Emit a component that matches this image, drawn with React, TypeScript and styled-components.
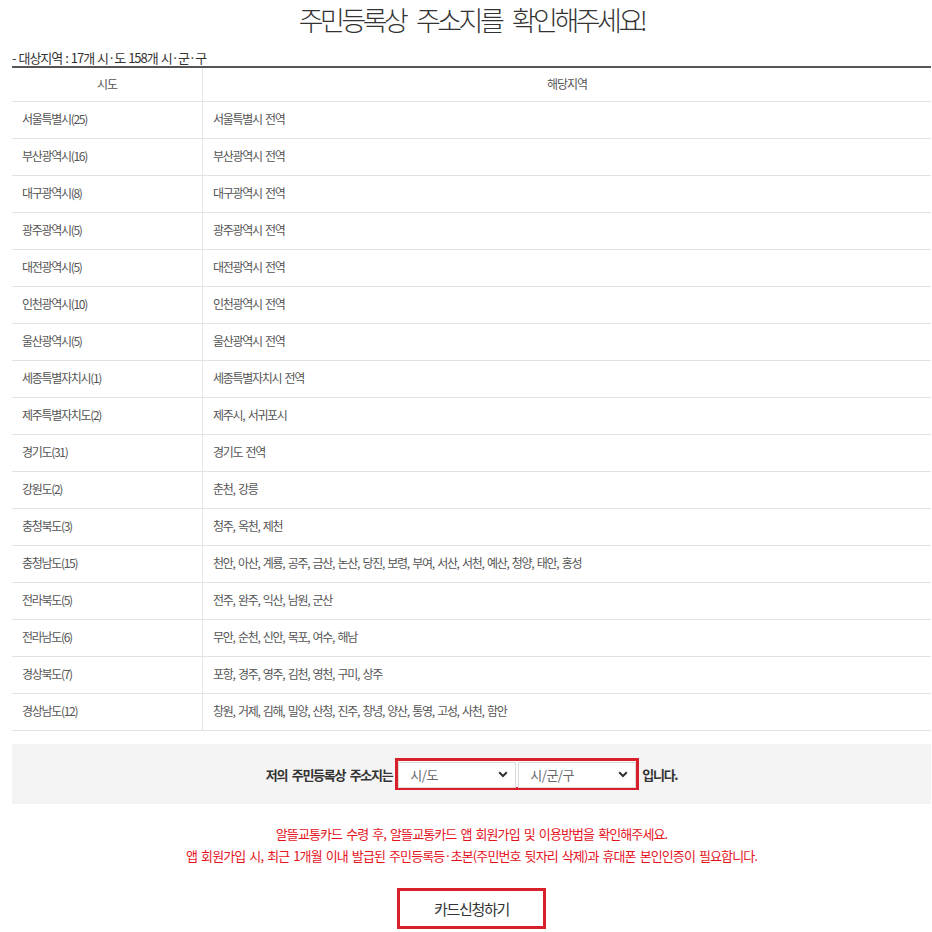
import React from 'react';
import styled, { createGlobalStyle } from 'styled-components';

const GlobalStyle = createGlobalStyle`
  html, body {
    margin: 0;
    padding: 0;
    background: #fff;
  }
  body {
    font-family: "Noto Sans CJK KR", "Noto Sans", sans-serif;
    color: #333;
  }
`;

interface Region {
  name: string;
  areas: string;
}

const REGIONS: Region[] = [
  { name: '서울특별시(25)', areas: '서울특별시 전역' },
  { name: '부산광역시(16)', areas: '부산광역시 전역' },
  { name: '대구광역시(8)', areas: '대구광역시 전역' },
  { name: '광주광역시(5)', areas: '광주광역시 전역' },
  { name: '대전광역시(5)', areas: '대전광역시 전역' },
  { name: '인천광역시(10)', areas: '인천광역시 전역' },
  { name: '울산광역시(5)', areas: '울산광역시 전역' },
  { name: '세종특별자치시(1)', areas: '세종특별자치시 전역' },
  { name: '제주특별자치도(2)', areas: '제주시, 서귀포시' },
  { name: '경기도(31)', areas: '경기도 전역' },
  { name: '강원도(2)', areas: '춘천, 강릉' },
  { name: '충청북도(3)', areas: '청주, 옥천, 제천' },
  {
    name: '충청남도(15)',
    areas: '천안, 아산, 계룡, 공주, 금산, 논산, 당진, 보령, 부여, 서산, 서천, 예산, 청양, 태안, 홍성',
  },
  { name: '전라북도(5)', areas: '전주, 완주, 익산, 남원, 군산' },
  { name: '전라남도(6)', areas: '무안, 순천, 신안, 목포, 여수, 해남' },
  { name: '경상북도(7)', areas: '포항, 경주, 영주, 김천, 영천, 구미, 상주' },
  { name: '경상남도(12)', areas: '창원, 거제, 김해, 밀양, 산청, 진주, 창녕, 양산, 통영, 고성, 사천, 함안' },
];

const Page = styled.div`
  width: 919px;
  margin-left: 12px;
`;

const Title = styled.h1`
  margin: 0;
  height: 40px;
  line-height: 40px;
  font-size: 27px;
  font-weight: 300;
  letter-spacing: -3.5px;
  word-spacing: 8px;
  text-align: center;
  color: #333;
`;

const Summary = styled.p`
  margin: 9px 0 0;
  line-height: 17px;
  font-size: 13px;
  letter-spacing: -1px;
  word-spacing: 1px;
  color: #333;
`;

const Table = styled.table`
  width: 100%;
  border-collapse: collapse;
  border-top: 2px solid #555;
  table-layout: fixed;
`;

const HeadCell = styled.th<{ $first?: boolean }>`
  width: ${(p) => (p.$first ? '190px' : 'auto')};
  height: 31px;
  padding: 0 0 2px;
  font-size: 12px;
  font-weight: 400;
  letter-spacing: -1px;
  color: #555;
  border-bottom: 1px solid #e2e2e2;
  border-right: ${(p) => (p.$first ? '1px solid #e6e6e6' : 'none')};
`;

const Cell = styled.td<{ $first?: boolean }>`
  height: 33px;
  padding: 0 10px 3px;
  font-size: 12px;
  letter-spacing: -1.3px;
  word-spacing: 2px;
  color: #555;
  border-bottom: 1px solid #e2e2e2;
  border-right: ${(p) => (p.$first ? '1px solid #e6e6e6' : 'none')};
  white-space: nowrap;
`;

const AddressBox = styled.div`
  margin-top: 13px;
  height: 60px;
  background: #f4f4f4;
  display: flex;
  align-items: center;
  justify-content: center;
  gap: 3px;
`;

const Label = styled.span`
  font-size: 13px;
  font-weight: 700;
  letter-spacing: -1.3px;
  word-spacing: 3px;
  color: #333;
`;

const SelectGroup = styled.div`
  display: flex;
  gap: 2px;
  border: 3px solid #d7202b;
  background: #fff;
`;

const SelectWrap = styled.div`
  position: relative;
  width: 118px;
  height: 26px;
`;

const Select = styled.select`
  appearance: none;
  width: 100%;
  height: 100%;
  margin: 0;
  padding: 0 0 0 11px;
  border: 1px solid #dcdcdc;
  border-radius: 0;
  background: #fff;
  font-family: inherit;
  font-size: 13px;
  letter-spacing: -0.5px;
  color: #666;
  outline: none;
`;

const Chevron = styled.svg`
  position: absolute;
  right: 8px;
  top: 50%;
  width: 10px;
  height: 7px;
  margin-top: -3px;
  pointer-events: none;
`;

const Notice = styled.div`
  margin-top: 19px;
  text-align: center;
  font-size: 13px;
  line-height: 22px;
  letter-spacing: -0.9px;
  word-spacing: 2px;
  color: #e4141e;
`;

const ButtonRow = styled.div`
  margin-top: 21px;
  display: flex;
  justify-content: center;
`;

const ApplyButton = styled.button`
  width: 149px;
  height: 41px;
  border: 3px solid #d7202b;
  background: #fff;
  font-family: inherit;
  font-size: 15px;
  letter-spacing: -1.3px;
  color: #333;
  cursor: pointer;
`;

const DropSelect: React.FC<{ placeholder: string }> = ({ placeholder }) => (
  <SelectWrap>
    <Select defaultValue="">
      <option value="">{placeholder}</option>
    </Select>
    <Chevron viewBox="0 0 10 7">
      <path d="M1.2 1.2 L5 5 L8.8 1.2" fill="none" stroke="#333" strokeWidth="2" />
    </Chevron>
  </SelectWrap>
);

export default function App() {
  return (
    <>
      <GlobalStyle />
      <Page>
        <Title>주민등록상 주소지를 확인해주세요!</Title>
        <Summary>- 대상지역 : 17개 시·도 158개 시·군·구</Summary>
        <Table>
          <thead>
            <tr>
              <HeadCell $first>시도</HeadCell>
              <HeadCell>해당지역</HeadCell>
            </tr>
          </thead>
          <tbody>
            {REGIONS.map((r) => (
              <tr key={r.name}>
                <Cell $first>{r.name}</Cell>
                <Cell>{r.areas}</Cell>
              </tr>
            ))}
          </tbody>
        </Table>
        <AddressBox>
          <Label>저의 주민등록상 주소지는</Label>
          <SelectGroup>
            <DropSelect placeholder="시/도" />
            <DropSelect placeholder="시/군/구" />
          </SelectGroup>
          <Label>입니다.</Label>
        </AddressBox>
        <Notice>
          알뜰교통카드 수령 후, 알뜰교통카드 앱 회원가입 및 이용방법을 확인해주세요.
          <br />
          앱 회원가입 시, 최근 1개월 이내 발급된 주민등록등·초본(주민번호 뒷자리 삭제)과 휴대폰 본인인증이 필요합니다.
        </Notice>
        <ButtonRow>
          <ApplyButton>카드신청하기</ApplyButton>
        </ButtonRow>
      </Page>
    </>
  );
}
